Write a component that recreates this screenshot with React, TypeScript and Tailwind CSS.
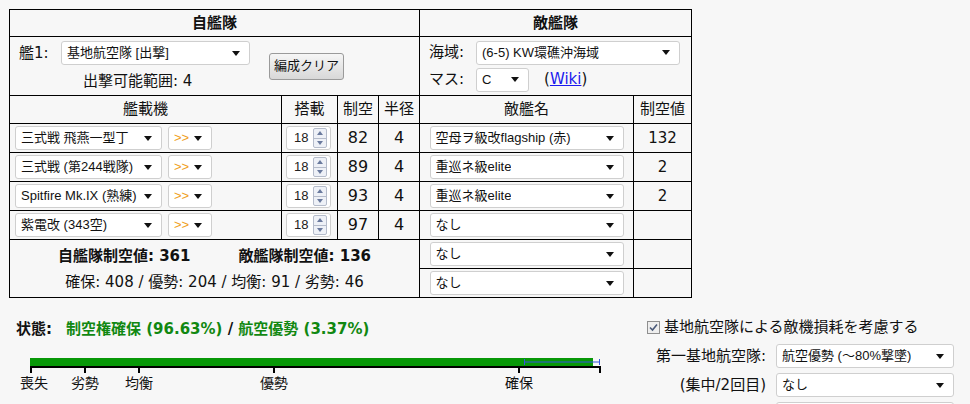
import React from "react";

const F = "font-['DejaVu_Sans','Noto_Sans_CJK_JP',sans-serif]";
const SF = "font-['Liberation_Sans','Noto_Sans_CJK_JP',sans-serif]";

function Tri() {
  return (
    <svg width="8" height="5" viewBox="0 0 8 5" className="shrink-0">
      <path d="M0 0H8L4 5Z" fill="#111" />
    </svg>
  );
}

function Sel({ cls, children }: { cls: string; children?: React.ReactNode }) {
  return (
    <div
      className={`flex items-center justify-between bg-white border border-[#cfcfcf] rounded-[3px] h-[24px] pl-[5px] pr-[9px] text-[13px] text-[#111] ${SF} ${cls}`}
    >
      <span className="whitespace-nowrap overflow-hidden">{children}</span>
      <Tri />
    </div>
  );
}

function Spin() {
  return (
    <div className="flex items-center justify-between w-[45px] h-[24px] bg-white border border-[#cfcfcf] rounded-[3px] pl-[7px] pr-[3px]">
      <span className={`text-[13px] text-[#222] ${SF}`}>18</span>
      <div className="flex flex-col w-[14px] h-[20px] border border-[#b5bccb] rounded-[2px] bg-[#eef1f7]">
        <div className="flex-1 flex items-center justify-center border-b border-[#b5bccb]">
          <svg width="6" height="4" viewBox="0 0 6 4">
            <path d="M0 4L3 0L6 4Z" fill="#6a7a9e" />
          </svg>
        </div>
        <div className="flex-1 flex items-center justify-center">
          <svg width="6" height="4" viewBox="0 0 6 4">
            <path d="M0 0H6L3 4Z" fill="#6a7a9e" />
          </svg>
        </div>
      </div>
    </div>
  );
}

const aircraft = [
  { name: "三式戦 飛燕一型丁", ac: "82" },
  { name: "三式戦 (第244戦隊)", ac: "89" },
  { name: "Spitfire Mk.IX (熟練)", ac: "93" },
  { name: "紫電改 (343空)", ac: "97" },
];

const enemies = [
  { name: "空母ヲ級改flagship (赤)", v: "132" },
  { name: "重巡ネ級elite", v: "2" },
  { name: "重巡ネ級elite", v: "2" },
  { name: "なし", v: "" },
  { name: "なし", v: "" },
  { name: "なし", v: "" },
];

const cell = "border border-black p-0";

function EnemyCells({ i }: { i: number }) {
  return (
    <>
      <td className={cell}>
        <div className="flex justify-center">
          <Sel cls="w-[194px]">{enemies[i].name}</Sel>
        </div>
      </td>
      <td className={`${cell} text-center`}>{enemies[i].v}</td>
    </>
  );
}

export default function App() {
  return (
    <div className={`min-h-screen w-full bg-[#f7f7f7] text-[15px] text-[#111] ${F}`}>
      <div className="pt-[9px] pl-[9px]">
        <table className="border-collapse table-fixed w-[683px]">
          <colgroup>
            <col className="w-[272px]" />
            <col className="w-[56px]" />
            <col className="w-[41px]" />
            <col className="w-[41px]" />
            <col className="w-[214px]" />
            <col className="w-[58px]" />
          </colgroup>
          <tbody>
            <tr className="h-[27px]">
              <th colSpan={4} className={`${cell} font-bold text-center`}>自艦隊</th>
              <th colSpan={2} className={`${cell} font-bold text-center`}>敵艦隊</th>
            </tr>
            <tr className="h-[59px]">
              <td colSpan={4} className={cell}>
                <div className="flex items-center pl-[9px]">
                  <div className="flex flex-col">
                    <div className="flex items-center">
                      <span className="w-[42px]">艦1:</span>
                      <Sel cls="w-[189px]">基地航空隊 [出撃]</Sel>
                    </div>
                    <div className="mt-[6px] pl-[64px] leading-[20px]">出撃可能範囲: 4</div>
                  </div>
                  <button
                    className={`ml-[19px] w-[75px] h-[27px] border border-[#9a9a9a] rounded-[3px] bg-gradient-to-b from-[#f6f6f6] to-[#d8d8d8] text-[13px] text-[#111] ${SF}`}
                  >
                    編成クリア
                  </button>
                </div>
              </td>
              <td colSpan={2} className={cell}>
                <div className="flex flex-col pl-[9px] gap-[3px]">
                  <div className="flex items-center">
                    <span className="w-[47px]">海域:</span>
                    <Sel cls="w-[204px]">(6-5) KW環礁沖海域</Sel>
                  </div>
                  <div className="flex items-center">
                    <span className="w-[47px]">マス:</span>
                    <Sel cls="w-[53px]">C</Sel>
                    <span className="ml-[15px]">
                      (<span className="text-[#1a1aee] underline">Wiki</span>)
                    </span>
                  </div>
                </div>
              </td>
            </tr>
            <tr className="h-[28px]">
              <td className={`${cell} text-center`}>艦載機</td>
              <td className={`${cell} text-center`}>搭載</td>
              <td className={`${cell} text-center`}>制空</td>
              <td className={`${cell} text-center`}>半径</td>
              <td className={`${cell} text-center`}>敵艦名</td>
              <td className={`${cell} text-center`}>制空値</td>
            </tr>
            {aircraft.map((a, i) => (
              <tr key={i} className="h-[29px]">
                <td className={cell}>
                  <div className="flex items-center pl-[5px] gap-[6px]">
                    <Sel cls="w-[147px]">{a.name}</Sel>
                    <Sel cls="w-[44px]">
                      <span className="text-[#f0a020]">&gt;&gt;</span>
                    </Sel>
                  </div>
                </td>
                <td className={cell}>
                  <div className="flex pl-[4px]">
                    <Spin />
                  </div>
                </td>
                <td className={`${cell} text-center text-[16px]`}>{a.ac}</td>
                <td className={`${cell} text-center text-[16px]`}>4</td>
                <EnemyCells i={i} />
              </tr>
            ))}
            <tr className="h-[29px]">
              <td colSpan={4} rowSpan={2} className={`${cell} text-center`}>
                <div className="leading-[26px]">
                  <span className="font-bold">自艦隊制空値: 361</span>
                  <span className="font-bold ml-[48px]">敵艦隊制空値: 136</span>
                </div>
                <div className="leading-[26px]">確保: 408 / 優勢: 204 / 均衡: 91 / 劣勢: 46</div>
              </td>
              <EnemyCells i={4} />
            </tr>
            <tr className="h-[29px]">
              <EnemyCells i={5} />
            </tr>
          </tbody>
        </table>
      </div>

      <div className="flex">
        <div className="w-[647px] shrink-0">
          <div className="pl-[16px] pt-[21px] leading-[20px] font-bold">
            状態:
            <span className="ml-[14px] text-[#118811]">制空権確保 (96.63%)</span>
            <span> / </span>
            <span className="text-[#118811]">航空優勢 (3.37%)</span>
          </div>
          <div className="relative ml-[28px] mt-[19px] w-[580px] h-[40px]">
            <svg width="580" height="16" viewBox="0 0 580 16" className="absolute left-0 top-0">
              <rect x="2" y="0" width="563" height="8" fill="#089808" />
              <rect x="2" y="8" width="571" height="2" fill="#000" />
              <rect x="2" y="8" width="2" height="7" fill="#000" />
              <rect x="56" y="8" width="2" height="7" fill="#000" />
              <rect x="110" y="8" width="2" height="7" fill="#000" />
              <rect x="245" y="8" width="2" height="7" fill="#000" />
              <rect x="490" y="8" width="2" height="7" fill="#000" />
              <rect x="571" y="8" width="2" height="7" fill="#000" />
              <rect x="496" y="3.5" width="76" height="1" fill="#3355dd" />
              <rect x="496" y="1" width="1" height="6" fill="#3355dd" />
              <rect x="571" y="1" width="1" height="6" fill="#3355dd" />
            </svg>
            <span className="absolute top-[16px] left-[-8px] text-[14px] leading-[18px]">喪失</span>
            <span className="absolute top-[16px] left-[43px] text-[14px] leading-[18px]">劣勢</span>
            <span className="absolute top-[16px] left-[97px] text-[14px] leading-[18px]">均衡</span>
            <span className="absolute top-[16px] left-[232px] text-[14px] leading-[18px]">優勢</span>
            <span className="absolute top-[16px] left-[477px] text-[14px] leading-[18px]">確保</span>
          </div>
        </div>
        <div className="pt-[18px]">
          <div className="flex items-center h-[22px]">
            <div className="w-[13px] h-[13px] border border-[#8f8f8f] bg-[#eeeeee] flex items-center justify-center">
              <svg width="9" height="9" viewBox="0 0 9 9">
                <path d="M1 4.5L3.5 7L8 1.5" stroke="#4a5a7a" strokeWidth="1.6" fill="none" />
              </svg>
            </div>
            <span className="ml-[4px]">基地航空隊による敵機損耗を考慮する</span>
          </div>
          <div className="mt-[6px] grid grid-cols-[119px_178px] gap-x-[10px] gap-y-[5px] items-center">
            <span className="text-right">第一基地航空隊:</span>
            <Sel cls="w-[178px]">航空優勢 (～80%撃墜)</Sel>
            <span className="text-right">(集中/2回目)</span>
            <Sel cls="w-[178px]">なし</Sel>
            <span className="text-right"></span>
            <Sel cls="w-[178px]"></Sel>
          </div>
        </div>
      </div>
    </div>
  );
}
